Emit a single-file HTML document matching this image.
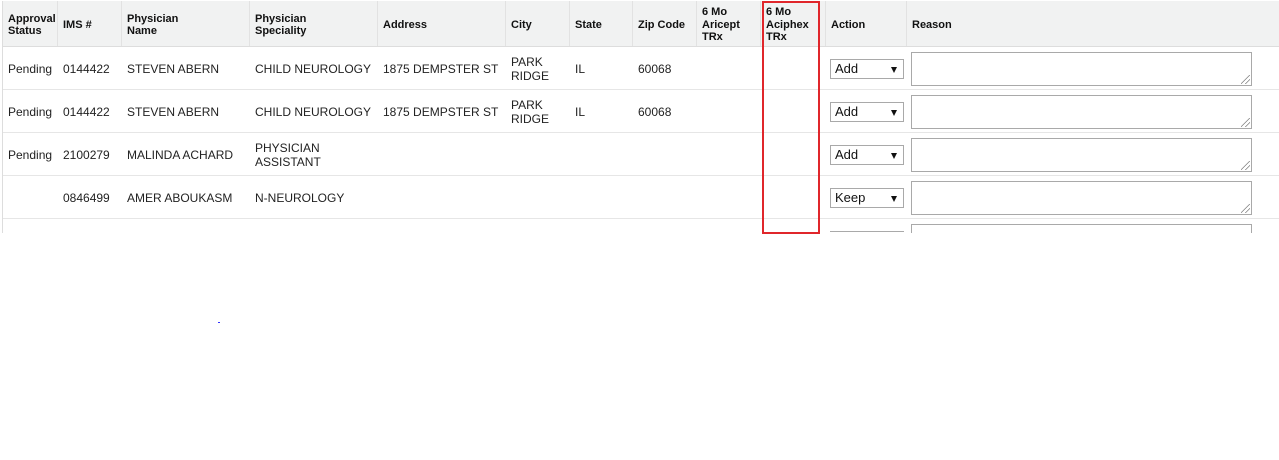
<!DOCTYPE html>
<html><head><meta charset="utf-8"><style>
*{box-sizing:border-box;margin:0;padding:0}
body{width:1279px;height:460px;background:#fff;font-family:"Liberation Sans",Arial,sans-serif;color:#222;position:relative;overflow:hidden}
.wrap{position:absolute;left:2px;top:1px;width:1277px;height:232px;overflow:hidden;border-left:1px solid #ddd}
.row{position:absolute;left:0;width:1277px;display:flex}
.hdr{top:0;height:46px;background:#f1f2f2;border-bottom:1px solid #ddd}
.hdr .c{font-weight:bold;font-size:11px;line-height:12.5px;color:#111;border-right:1px solid #e2e2e2;padding-top:3px}
.c{padding-left:5px;display:flex;align-items:center;font-size:12px;line-height:14px;flex:none}
.d{height:43px;border-bottom:1px solid #e6e6e6}
.d .c{padding-top:2px}
.sel{position:absolute;width:74px;height:20px;border:1px solid #a9a9a9;background:#fff;font-size:13px;line-height:18px;padding-left:4px;color:#111}
.sel:after{content:"";position:absolute;right:6px;top:7px;border-left:3.5px solid transparent;border-right:3.5px solid transparent;border-top:6px solid #111}
.ta{position:absolute;width:341px;height:34px;border:1px solid #a9a9a9;background:#fff}
.ta:after{content:"";position:absolute;right:1px;bottom:1px;width:9px;height:9px;background:linear-gradient(135deg,transparent 45%,#888 46%,#888 52%,transparent 53%,transparent 70%,#888 71%,#888 77%,transparent 78%)}
.red{position:absolute;left:762px;top:1px;width:58px;height:233px;border:2px solid #e0262b}
</style></head><body>
<div class="wrap">
<div class="row hdr">
<div class="c" style="width:55px">Approval<br>Status</div>
<div class="c" style="width:64px">IMS #</div>
<div class="c" style="width:128px">Physician<br>Name</div>
<div class="c" style="width:128px">Physician<br>Speciality</div>
<div class="c" style="width:128px">Address</div>
<div class="c" style="width:64px">City</div>
<div class="c" style="width:63px">State</div>
<div class="c" style="width:64px">Zip Code</div>
<div class="c" style="width:64px">6 Mo<br>Aricept<br>TRx</div>
<div class="c" style="width:65px">6 Mo<br>Aciphex<br>TRx</div>
<div class="c" style="width:81px">Action</div>
<div class="c" style="width:371px;border-right:none">Reason</div>
</div>

<div class="row d" style="top:46px">
<div class="c" style="width:55px">Pending</div><div class="c" style="width:64px">0144422</div><div class="c" style="width:128px">STEVEN ABERN</div><div class="c" style="width:128px">CHILD NEUROLOGY</div><div class="c" style="width:128px">1875 DEMPSTER ST</div><div class="c" style="width:64px">PARK<br>RIDGE</div><div class="c" style="width:63px">IL</div><div class="c" style="width:64px">60068</div>
</div>
<div class="row d" style="top:89px">
<div class="c" style="width:55px">Pending</div><div class="c" style="width:64px">0144422</div><div class="c" style="width:128px">STEVEN ABERN</div><div class="c" style="width:128px">CHILD NEUROLOGY</div><div class="c" style="width:128px">1875 DEMPSTER ST</div><div class="c" style="width:64px">PARK<br>RIDGE</div><div class="c" style="width:63px">IL</div><div class="c" style="width:64px">60068</div>
</div>
<div class="row d" style="top:132px">
<div class="c" style="width:55px">Pending</div><div class="c" style="width:64px">2100279</div><div class="c" style="width:128px">MALINDA ACHARD</div><div class="c" style="width:128px">PHYSICIAN<br>ASSISTANT</div>
</div>
<div class="row d" style="top:175px">
<div class="c" style="width:55px"></div><div class="c" style="width:64px">0846499</div><div class="c" style="width:128px">AMER ABOUKASM</div><div class="c" style="width:128px">N-NEUROLOGY</div>
</div>
</div>

<div class="sel" style="left:830px;top:59px">Add</div>
<div class="sel" style="left:830px;top:102px">Add</div>
<div class="sel" style="left:830px;top:145px">Add</div>
<div class="sel" style="left:830px;top:188px">Keep</div>
<div style="position:absolute;left:830px;top:231px;width:74px;height:2px;border-top:1px solid #a9a9a9"></div>
<div class="ta" style="left:911px;top:52px"></div>
<div class="ta" style="left:911px;top:95px"></div>
<div class="ta" style="left:911px;top:138px"></div>
<div class="ta" style="left:911px;top:181px"></div>
<div style="position:absolute;left:911px;top:224px;width:341px;height:9px;border:1px solid #a9a9a9;border-bottom:none"></div>
<div class="red"></div>
<div style="position:absolute;left:218px;top:322px;width:2px;height:1px;background:#33f"></div>
</body></html>
